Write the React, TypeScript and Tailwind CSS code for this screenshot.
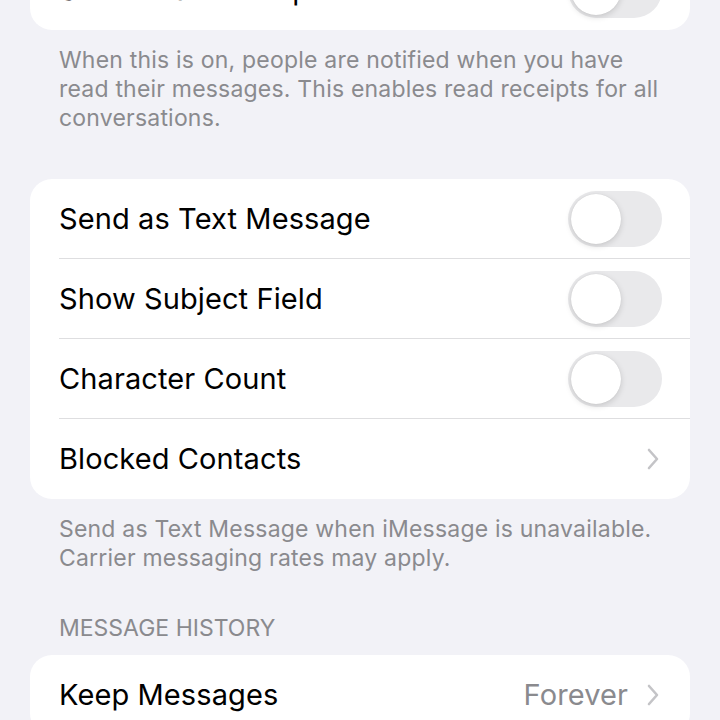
import React from 'react';

const font = { fontFamily: 'Inter, "Noto Sans", sans-serif' };

const Toggle: React.FC = () => (
  <div className="relative h-[56px] w-[94px] rounded-full bg-[#e9e9eb]">
    <div className="absolute left-[3px] top-[3px] h-[50px] w-[50px] rounded-full bg-white shadow-[0_2px_6px_rgba(0,0,0,0.15),0_0_1px_rgba(0,0,0,0.1)]" />
  </div>
);

const Chevron: React.FC = () => (
  <svg width="14" height="24" viewBox="0 0 14 24" fill="none">
    <path d="M3 3l8 9-8 9" stroke="#c4c4c7" strokeWidth="2.6" strokeLinecap="round" strokeLinejoin="round" />
  </svg>
);

interface RowProps {
  label: string;
  toggle?: boolean;
  value?: string;
  last?: boolean;
}

const Row: React.FC<RowProps> = ({ label, toggle, value, last }) => (
  <div className="flex h-[80px] items-center pl-[29px]">
    <div
      className={`flex h-full flex-1 items-center justify-between pr-[28px] ${
        last ? '' : 'border-b border-[#dedee0]'
      }`}
    >
      <span className="text-[29px] tracking-[0.1px] text-black">{label}</span>
      {toggle ? (
        <Toggle />
      ) : (
        <div className="flex items-center gap-[18px] pr-[2px]">
          {value && <span className="text-[29px] tracking-[0.1px] text-[#8a8a8e]">{value}</span>}
          <Chevron />
        </div>
      )}
    </div>
  </div>
);

const Footer: React.FC<{ children: React.ReactNode }> = ({ children }) => (
  <p className="px-[59px] pt-[16px] text-[23px] tracking-[0.2px] leading-[29px] text-[#8a8a8e]">{children}</p>
);

export default function App() {
  return (
    <div className="h-[720px] w-[720px] overflow-hidden bg-[#f2f2f7]" style={font}>
      <div className="-mt-[50px]">
        <div className="mx-[30px] overflow-hidden rounded-[22px] bg-white">
          <Row label="Send Read Receipts" toggle last />
        </div>
        <Footer>
          When this is on, people are notified when you have read their messages. This enables read
          receipts for all conversations.
        </Footer>

        <div className="mx-[30px] mt-[46px] overflow-hidden rounded-[22px] bg-white">
          <Row label="Send as Text Message" toggle />
          <Row label="Show Subject Field" toggle />
          <Row label="Character Count" toggle />
          <Row label="Blocked Contacts" last />
        </div>
        <Footer>
          Send as Text Message when iMessage is unavailable. Carrier messaging rates may apply.
        </Footer>

        <div className="px-[59px] pt-[41px] pb-[13px] text-[23px] uppercase leading-[28px] text-[#8a8a8e]">
          Message History
        </div>
        <div className="mx-[30px] overflow-hidden rounded-[22px] bg-white">
          <Row label="Keep Messages" value="Forever" last />
        </div>
      </div>
    </div>
  );
}
